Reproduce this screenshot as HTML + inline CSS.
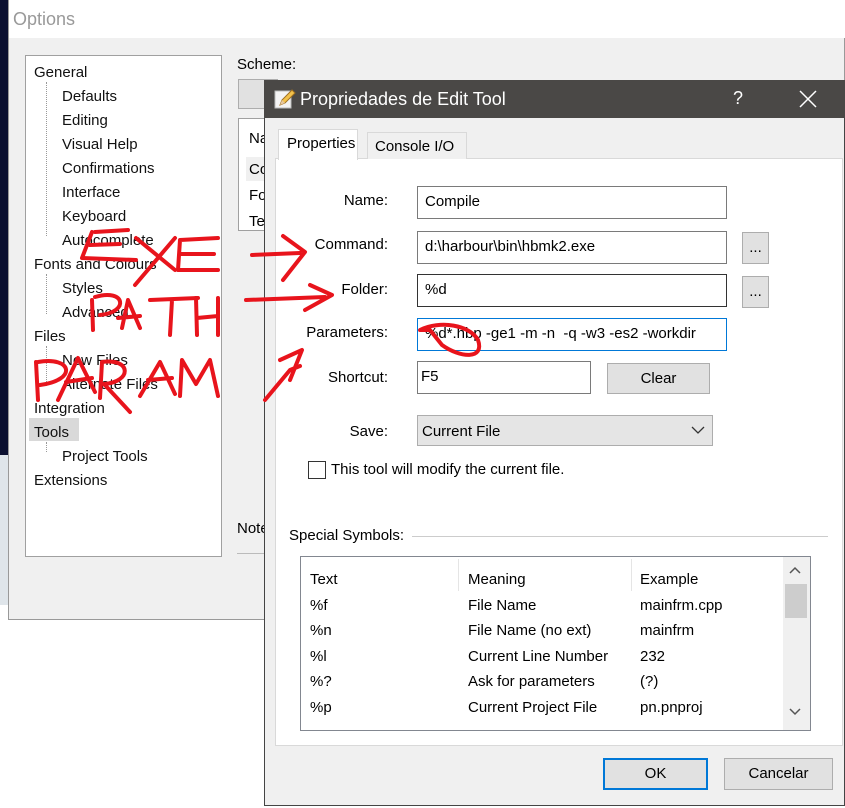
<!DOCTYPE html>
<html><head><meta charset="utf-8"><style>
*{box-sizing:border-box;margin:0;padding:0}
body{width:845px;height:808px;position:relative;overflow:hidden;background:#fff;font-family:"Liberation Sans",sans-serif;font-size:15px;color:#000}
.a{position:absolute}
.t{position:absolute;white-space:nowrap}
.fld{position:absolute;background:#fff;border:1px solid #7a7a7a;padding:6px 7px;font-size:15px}
.btn{position:absolute;background:#e1e1e1;border:1px solid #adadad;text-align:center}
.lbl{position:absolute;width:120px;text-align:right;left:268px}
</style></head><body>
<!-- left dark strip -->
<div class="a" style="left:0;top:0;width:8px;height:455px;background:#0b1030"></div>
<div class="a" style="left:0;top:455px;width:8px;height:150px;background:#dfe5ea"></div>
<!-- Options window -->
<div class="a" style="left:8px;top:0;width:837px;height:620px;background:#f0f0f0;border:1px solid #999"></div>
<div class="a" style="left:9px;top:0;width:836px;height:38px;background:#fff"></div>
<div class="t" style="left:13px;top:9px;font-size:18px;color:#999">Options</div>
<div class="a" style="left:25px;top:55px;width:197px;height:502px;background:#fff;border:1px solid #a0a0a0"></div>
<div class="a" style="left:46px;top:82px;height:154px;border-left:1px dotted #999"></div>
<div class="a" style="left:46px;top:274px;height:40px;border-left:1px dotted #999"></div>
<div class="a" style="left:46px;top:346px;height:40px;border-left:1px dotted #999"></div>
<div class="a" style="left:46px;top:442px;height:10px;border-left:1px dotted #999"></div>
<div class="a" style="left:29px;top:418px;width:50px;height:23px;background:#d9d9d9"></div>
<div class="t" style="left:34px;top:61px;line-height:24px;color:#111">General<br><span style="padding-left:28px">Defaults</span><br><span style="padding-left:28px">Editing</span><br><span style="padding-left:28px">Visual Help</span><br><span style="padding-left:28px">Confirmations</span><br><span style="padding-left:28px">Interface</span><br><span style="padding-left:28px">Keyboard</span><br><span style="padding-left:28px">Autocomplete</span><br>Fonts and Colours<br><span style="padding-left:28px">Styles</span><br><span style="padding-left:28px">Advanced</span><br>Files<br><span style="padding-left:28px">New Files</span><br><span style="padding-left:28px">Alternate Files</span><br>Integration<br>Tools<br><span style="padding-left:28px">Project Tools</span><br>Extensions</div>
<div class="t" style="left:237px;top:56px">Scheme:</div>
<div class="a" style="left:238px;top:79px;width:40px;height:30px;background:#e1e1e1;border:1px solid #adadad"></div>
<div class="a" style="left:238px;top:118px;width:40px;height:113px;background:#fff;border:1px solid #a0a0a0"></div>
<div class="t" style="left:249px;top:130px">Na</div>
<div class="a" style="left:246px;top:157px;width:30px;height:24px;background:#f0f0f0"></div>
<div class="t" style="left:249px;top:161px">Co</div>
<div class="t" style="left:249px;top:187px">Fo</div>
<div class="t" style="left:249px;top:213px">Te</div>
<div class="t" style="left:237px;top:520px">Note</div>
<div class="a" style="left:237px;top:553px;width:40px;border-top:1px solid #bbb"></div>
<!-- Dialog -->
<div class="a" style="left:264px;top:80px;width:581px;height:726px;background:#f0f0f0;border:1px solid #444"></div>
<div class="a" style="left:264px;top:80px;width:581px;height:38px;background:#4a4846"></div>
<svg class="a" style="left:274px;top:88px" width="22" height="22" viewBox="0 0 22 22"><rect x="1" y="3" width="16" height="17" fill="#f4f4f4" stroke="#bbb"/><path d="M6 17 L8 12 L18 2 L21 5 L11 15 Z" fill="#f3c24b" stroke="#a07020"/><path d="M6 17 L8 12 L11 15Z" fill="#e8c9a0"/></svg>
<div class="t" style="left:300px;top:89px;font-size:18px;color:#fff">Propriedades de Edit Tool</div>
<div class="t" style="left:733px;top:88px;font-size:18px;color:#fff">?</div>
<svg class="a" style="left:799px;top:90px" width="18" height="18"><path d="M1 1L17 17M17 1L1 17" stroke="#fff" stroke-width="1.5"/></svg>
<div class="a" style="left:275px;top:158px;width:568px;height:588px;background:#fff;border:1px solid #d9d9d9"></div>
<div class="a" style="left:278px;top:129px;width:80px;height:31px;background:#fff;border:1px solid #d9d9d9;border-bottom:none"></div>
<div class="t" style="left:287px;top:135px">Properties</div>
<div class="a" style="left:367px;top:132px;width:100px;height:27px;background:#f0f0f0;border:1px solid #d9d9d9;border-bottom:none"></div>
<div class="t" style="left:375px;top:138px">Console I/O</div>
<div class="lbl" style="top:192px">Name:</div>
<div class="fld" style="left:417px;top:186px;width:310px;height:33px">Compile</div>
<div class="lbl" style="top:236px">Command:</div>
<div class="fld" style="left:417px;top:231px;width:310px;height:33px">d:\harbour\bin\hbmk2.exe</div>
<div class="btn" style="left:742px;top:232px;width:27px;height:32px;line-height:30px">...</div>
<div class="lbl" style="top:281px">Folder:</div>
<div class="fld" style="left:417px;top:274px;width:310px;height:33px;border-color:#333">%d</div>
<div class="btn" style="left:742px;top:276px;width:27px;height:32px;line-height:30px">...</div>
<div class="lbl" style="top:324px">Parameters:</div>
<div class="fld" style="left:417px;top:318px;width:310px;height:33px;border-color:#0078d7;overflow:hidden">%d*.hbp -ge1 -m -n &nbsp;-q -w3 -es2 -workdir</div>
<div class="lbl" style="top:369px">Shortcut:</div>
<div class="fld" style="left:417px;top:361px;width:174px;height:33px;padding:6px 3px">F5</div>
<div class="btn" style="left:607px;top:363px;width:103px;height:31px;line-height:29px">Clear</div>
<div class="lbl" style="top:423px">Save:</div>
<div class="a" style="left:417px;top:415px;width:296px;height:31px;background:#e5e5e5;border:1px solid #adadad"></div>
<div class="t" style="left:422px;top:423px">Current File</div>
<svg class="a" style="left:691px;top:425px" width="14" height="10"><path d="M1 2L7 8L13 2" stroke="#333" fill="none" stroke-width="1.3"/></svg>
<div class="a" style="left:308px;top:461px;width:18px;height:18px;background:#fff;border:1px solid #333"></div>
<div class="t" style="left:331px;top:461px">This tool will modify the current file.</div>
<div class="t" style="left:289px;top:527px">Special Symbols:</div>
<div class="a" style="left:412px;top:536px;width:416px;border-top:1px solid #ccc"></div>
<div class="a" style="left:300px;top:556px;width:511px;height:175px;background:#fff;border:1px solid #828790;overflow:hidden"></div>
<div class="a" style="left:458px;top:559px;height:32px;border-left:1px solid #e5e5e5"></div>
<div class="a" style="left:631px;top:559px;height:32px;border-left:1px solid #e5e5e5"></div>
<div class="a" style="left:783px;top:557px;width:27px;height:173px;background:#f0f0f0"></div>
<div class="a" style="left:785px;top:584px;width:22px;height:34px;background:#cdcdcd"></div>
<svg class="a" style="left:788px;top:566px" width="14" height="150"><path d="M2 7L7 2L12 7" stroke="#555" fill="none" stroke-width="1.5"/><path d="M2 143L7 148L12 143" stroke="#555" fill="none" stroke-width="1.5"/></svg>
<div class="t" style="left:310px;top:567px;line-height:25.5px">Text<br>%f<br>%n<br>%l<br>%?<br>%p</div>
<div class="t" style="left:468px;top:567px;line-height:25.5px">Meaning<br>File Name<br>File Name (no ext)<br>Current Line Number<br>Ask for parameters<br>Current Project File</div>
<div class="t" style="left:640px;top:567px;line-height:25.5px">Example<br>mainfrm.cpp<br>mainfrm<br>232<br>(?)<br>pn.pnproj</div>
<div class="btn" style="left:603px;top:758px;width:105px;height:32px;line-height:28px;border:2px solid #0078d7">OK</div>
<div class="btn" style="left:724px;top:758px;width:109px;height:32px;line-height:30px">Cancelar</div>
<!-- red annotations -->
<svg class="a" style="left:0;top:0" width="845" height="808" fill="none" stroke="#e8141c" stroke-width="4" stroke-linecap="round" stroke-linejoin="round">
<path d="M95 232L128 230M92 232L82 258L136 260M90 245L120 244"/>
<path d="M136 238L175 270M175 238L135 285"/>
<path d="M218 238L180 240L178 270L218 270M180 254L214 254"/>
<path d="M252 255L300 253M283 236L305 252L283 280"/>
<path d="M92 300L93 330M95 297C125 288 130 312 100 315"/>
<path d="M122 328L128 300L140 328M118 318L140 316"/>
<path d="M150 300L198 298M172 300L170 335"/>
<path d="M196 298L197 335M218 298L218 335M197 318L218 316"/>
<path d="M246 300L325 297M310 285L332 295L305 310"/>
<path d="M36 362L38 400M38 362C72 356 78 380 40 385"/>
<path d="M58 400L78 358L95 392M66 382L92 378"/>
<path d="M100 398L102 362C132 358 132 382 104 384L130 412"/>
<path d="M140 396L160 362L175 394M148 380L172 378"/>
<path d="M180 396L182 360L196 384L210 360L218 396"/>
<path d="M265 400L290 370L300 366M280 360L302 350L290 380"/>
<path d="M420 330C440 320 470 325 478 340C485 360 460 358 442 345L430 330Z"/>
</svg>
</body></html>
